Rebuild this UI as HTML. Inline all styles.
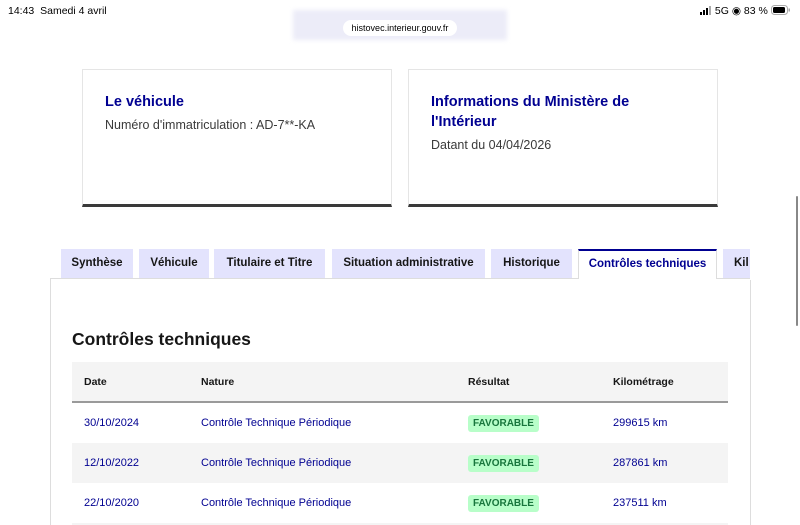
<!DOCTYPE html>
<html style="width:800px;height:525px;overflow:hidden"><head><meta charset="utf-8"><style>
*{margin:0;padding:0;box-sizing:border-box}
body{width:800px;height:525px;overflow:hidden;background:#fff;font-family:"Liberation Sans",sans-serif;position:relative;color:#161616}
.abs{position:absolute}
.card{position:absolute;top:69px;height:138px;border:1px solid #e5e5e5;border-bottom:3px solid #3a3a3a;background:#fff}
.card h3{color:#000091;font-size:14.5px;font-weight:bold;line-height:20px}
.card p{font-size:12.5px;color:#3a3a3a;margin-top:6px}
.tab{position:absolute;top:249px;height:29px;background:#e3e3fd;font-size:11.5px;font-weight:bold;line-height:29px;text-align:center;color:#161616}
.tab.act{background:#fff;color:#000091;border-top:2px solid #000091;border-left:1px solid #ddd;border-right:1px solid #ddd;height:30px;line-height:27px}
.row{position:absolute;left:72px;width:656px;height:40px;font-size:11px;color:#000091;line-height:40px}
.row span{position:absolute}
.badge{position:absolute;left:396px;top:12px;height:17px;line-height:17px;padding:0 5px;background:#b8fec9;color:#18753c;font-weight:bold;font-size:10px;border-radius:3px}
</style></head><body>
<div class="abs" style="left:8px;top:5px;font-size:10.5px;color:#000">14:43&nbsp;&nbsp;Samedi 4 avril</div>
<div class="abs" style="left:293px;top:10px;width:214px;height:30px;background:#ececf8;filter:blur(2px)"></div>
<div class="abs" style="left:343px;top:20px;width:114px;height:16px;background:#fff;border-radius:8px;font-size:9px;line-height:16px;text-align:center;color:#000">histovec.interieur.gouv.fr</div>
<div class="abs" style="left:700px;top:5px;font-size:10.5px;color:#000">
<svg width="12" height="9" style="vertical-align:-1px"><rect x="0" y="6" width="2" height="3"/><rect x="3" y="4" width="2" height="5"/><rect x="6" y="2" width="2" height="7"/><rect x="9" y="0" width="2" height="9" fill="#aaa"/></svg> 5G ◉ 83 %
<svg width="20" height="10" style="vertical-align:-1px"><rect x="0.5" y="0.5" width="16" height="9" rx="3" fill="none" stroke="#aaa"/><rect x="2" y="2" width="12" height="6" rx="1.5"/><rect x="17.5" y="3.5" width="1.5" height="3" fill="#aaa"/></svg></div>

<div class="card" style="left:82px;width:310px;padding:22px 22px"><h3>Le véhicule</h3><p>Numéro d'immatriculation : AD-7**-KA</p></div>
<div class="card" style="left:408px;width:310px;padding:22px 22px"><h3>Informations du Ministère de l'Intérieur</h3><p style="margin-top:6px">Datant du 04/04/2026</p></div>

<div class="abs" style="left:50px;top:278px;width:701px;height:250px;border:1px solid #ddd;border-bottom:none"></div>
<div class="abs" style="left:750px;top:249px;width:50px;height:31px;background:#fff"></div>
<div class="tab" style="left:61px;width:72px">Synthèse</div>
<div class="tab" style="left:139px;width:70px">Véhicule</div>
<div class="tab" style="left:214px;width:111px">Titulaire et Titre</div>
<div class="tab" style="left:332px;width:153px">Situation administrative</div>
<div class="tab" style="left:491px;width:81px">Historique</div>
<div class="tab act" style="left:578px;width:139px">Contrôles techniques</div>
<div class="tab" style="left:723px;width:27px;text-align:left;padding-left:11px;overflow:hidden">Kil</div>
<div class="abs" style="left:796px;top:196px;width:2px;height:130px;background:#888;border-radius:1px"></div>

<div class="abs" style="left:72px;top:329px;font-size:17.5px;font-weight:bold">Contrôles techniques</div>
<div class="row" style="top:362px;background:#f4f4f4;color:#161616;font-weight:bold;font-size:10.5px;border-bottom:2px solid #9a9a9a;height:41px"><span style="left:12px">Date</span><span style="left:129px">Nature</span><span style="left:396px">Résultat</span><span style="left:541px">Kilométrage</span></div>
<div class="row" style="top:403px"><span style="left:12px">30/10/2024</span><span style="left:129px">Contrôle Technique Périodique</span><span class="badge">FAVORABLE</span><span style="left:541px">299615 km</span></div>
<div class="row" style="top:443px;background:#f4f4f4"><span style="left:12px">12/10/2022</span><span style="left:129px">Contrôle Technique Périodique</span><span class="badge">FAVORABLE</span><span style="left:541px">287861 km</span></div>
<div class="row" style="top:483px"><span style="left:12px">22/10/2020</span><span style="left:129px">Contrôle Technique Périodique</span><span class="badge">FAVORABLE</span><span style="left:541px">237511 km</span></div>
<div class="row" style="top:523px;height:2px;background:#f4f4f4"></div>
</body></html>
